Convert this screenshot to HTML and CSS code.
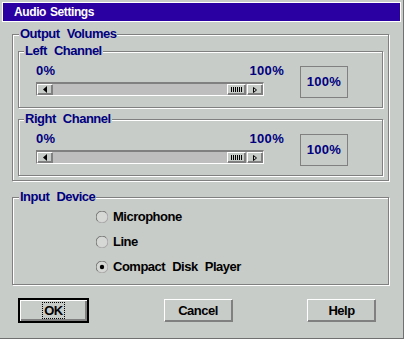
FILE: index.html
```html
<!DOCTYPE html>
<html lang="en">
<head>
    <meta charset="UTF-8">
    <meta name="viewport" content="width=device-width, initial-scale=1.0">
    <title>Audio Settings</title>
    <link rel="stylesheet" href="styles.css">
</head>
<body>
    <div class="dialog">
        <div class="titlebar">Audio Settings</div>

        <fieldset class="group outer">
            <legend>Output Volumes</legend>

            <fieldset class="group channel">
                <legend>Left Channel</legend>
                <div class="channel-row">
                    <div class="slider">
                        <div class="scale"><span>0%</span><span>100%</span></div>
                        <div class="scrollbar">
                            <span class="sb-btn arrow">
                                <svg width="4" height="7" viewBox="0 0 4 7"><polygon points="4,0 0,3.5 4,7" fill="#000"/></svg>
                            </span>
                            <span class="track"></span>
                            <span class="sb-btn thumb">
                                <svg width="11" height="5" viewBox="0 0 11 5"><path d="M0.5 0v5M2.5 0v5M4.5 0v5M6.5 0v5M8.5 0v5M10.5 0v5" stroke="#000" stroke-width="1"/></svg>
                            </span>
                            <span class="sb-btn arrow">
                                <svg width="4" height="6" viewBox="0 0 4 6"><path d="M0.5 0.5L3.5 3L0.5 5.5Z" fill="none" stroke="#000" stroke-width="1"/></svg>
                            </span>
                        </div>
                    </div>
                    <div class="value">100%</div>
                </div>
            </fieldset>

            <fieldset class="group channel second">
                <legend>Right Channel</legend>
                <div class="channel-row">
                    <div class="slider">
                        <div class="scale"><span>0%</span><span>100%</span></div>
                        <div class="scrollbar">
                            <span class="sb-btn arrow">
                                <svg width="4" height="7" viewBox="0 0 4 7"><polygon points="4,0 0,3.5 4,7" fill="#000"/></svg>
                            </span>
                            <span class="track"></span>
                            <span class="sb-btn thumb">
                                <svg width="11" height="5" viewBox="0 0 11 5"><path d="M0.5 0v5M2.5 0v5M4.5 0v5M6.5 0v5M8.5 0v5M10.5 0v5" stroke="#000" stroke-width="1"/></svg>
                            </span>
                            <span class="sb-btn arrow">
                                <svg width="4" height="6" viewBox="0 0 4 6"><path d="M0.5 0.5L3.5 3L0.5 5.5Z" fill="none" stroke="#000" stroke-width="1"/></svg>
                            </span>
                        </div>
                    </div>
                    <div class="value">100%</div>
                </div>
            </fieldset>
        </fieldset>

        <fieldset class="group input">
            <legend>Input Device</legend>
            <div class="radios">
                <div class="radio">
                    <svg width="12" height="12" viewBox="0 0 12 12"><circle cx="6" cy="6" r="5" fill="#d6d8d6"/><path d="M1.76 10.24A5.5 5.5 0 0 1 10.24 1.76" fill="none" stroke="#6e6e6e"/><path d="M10.24 1.76A5.5 5.5 0 0 1 1.76 10.24" fill="none" stroke="#a4a4a4"/></svg>
                    <span>Microphone</span>
                </div>
                <div class="radio">
                    <svg width="12" height="12" viewBox="0 0 12 12"><circle cx="6" cy="6" r="5" fill="#d6d8d6"/><path d="M1.76 10.24A5.5 5.5 0 0 1 10.24 1.76" fill="none" stroke="#6e6e6e"/><path d="M10.24 1.76A5.5 5.5 0 0 1 1.76 10.24" fill="none" stroke="#a4a4a4"/></svg>
                    <span>Line</span>
                </div>
                <div class="radio">
                    <svg width="12" height="12" viewBox="0 0 12 12"><circle cx="6" cy="6" r="5" fill="#d6d8d6"/><path d="M1.76 10.24A5.5 5.5 0 0 1 10.24 1.76" fill="none" stroke="#6e6e6e"/><path d="M10.24 1.76A5.5 5.5 0 0 1 1.76 10.24" fill="none" stroke="#a4a4a4"/><circle cx="6" cy="6" r="2.2" fill="#000"/></svg>
                    <span>Compact Disk Player</span>
                </div>
            </div>
        </fieldset>

        <div class="buttons">
            <button class="btn default"><span class="focus">OK</span></button>
            <button class="btn">Cancel</button>
            <button class="btn">Help</button>
        </div>
    </div>
</body>
</html>
```

FILE: styles.css
```css
* {
    margin: 0;
    padding: 0;
    box-sizing: border-box;
}

body {
    background: #c8ccc8;
    font-family: 'Liberation Sans', Arial, sans-serif;
    font-size: 13px;
    font-weight: bold;
    letter-spacing: -0.5px;
    word-spacing: 4px;
    line-height: 14px;
    color: #00007f;
}

.dialog {
    width: 404px;
    height: 339px;
    padding: 2px 2px 0 2px;
    border-right: 1px solid #707070;
    border-bottom: 1px solid #707070;
    background: #c8ccc8;
}

.titlebar {
    height: 20px;
    border: 1px solid #fff;
    background: #2a00a2;
    color: #fff;
    font-size: 12px;
    letter-spacing: -0.4px;
    word-spacing: 1px;
    line-height: 18px;
    padding-left: 11px;
}

/* etched group boxes */
.group {
    border: 1px solid #808080;
    box-shadow: inset 1px 1px 0 #fff, 1px 1px 0 #fff;
    min-width: 0;
}

.group legend {
    padding: 0 1px;
    margin-left: 1px;
    background: #c8ccc8;
    line-height: 14px;
}

.outer {
    width: 377px;
    margin: 5px 0 0 10px;
    padding: 3px 5px 4px 5px;
}

.channel {
    padding: 6px 5px 9px 17px;
}

.channel legend {
    margin-left: -12px;
}

.channel.second {
    margin-top: 4px;
}

.channel-row {
    display: flex;
    align-items: flex-start;
}

.slider {
    width: 248px;
}

.scale {
    display: flex;
    justify-content: space-between;
    letter-spacing: 0.3px;
}

.scrollbar {
    display: flex;
    width: 228px;
    height: 14px;
    margin-top: 4px;
    border-top: 2px solid #808080;
    border-left: 1px solid #808080;
    border-bottom: 1px solid #fff;
    border-right: 1px solid #fff;
    background: #bebebe;
}

.sb-btn {
    display: flex;
    align-items: center;
    justify-content: center;
    height: 11px;
    background: #c8ccc8;
    border-top: 1px solid #fff;
    border-left: 1px solid #fff;
    border-right: 1px solid #808080;
    border-bottom: 1px solid #808080;
    box-shadow: inset -1px -1px 0 #808080;
}

.arrow {
    width: 16px;
}

.thumb {
    width: 19px;
    margin-right: 1px;
}

.track {
    flex: 1;
}

.value {
    width: 48px;
    height: 32px;
    margin: 2px 0 0 16px;
    border: 1px solid #808080;
    display: flex;
    align-items: center;
    justify-content: center;
    letter-spacing: 0.3px;
}

.input {
    width: 377px;
    margin: 9px 0 0 10px;
    padding: 6px 5px 10px 5px;
}

.radios {
    margin-left: 78px;
    display: flex;
    flex-direction: column;
    gap: 11px;
    color: #000;
}

.radio {
    display: flex;
    align-items: center;
    gap: 5px;
}

.radio svg {
    display: block;
}

.buttons {
    display: flex;
    justify-content: space-between;
    align-items: center;
    margin-top: 13px;
    padding: 0 25px 0 16px;
}

.btn {
    width: 69px;
    height: 23px;
    background: #c8ccc8;
    border: 1px solid;
    border-color: #fff #808080 #808080 #fff;
    box-shadow: inset -1px -1px 0 #808080;
    font-family: 'Liberation Sans', Arial, sans-serif;
    font-size: 13px;
    font-weight: bold;
    letter-spacing: -0.5px;
    color: #000;
}

.btn.default {
    width: 71px;
    height: 25px;
    border: 2px solid #000;
    box-shadow: inset 1px 1px 0 #fff, inset -2px -2px 0 #808080;
}

.focus {
    outline: 1px dotted #000;
    padding: 0 1px;
}
```
